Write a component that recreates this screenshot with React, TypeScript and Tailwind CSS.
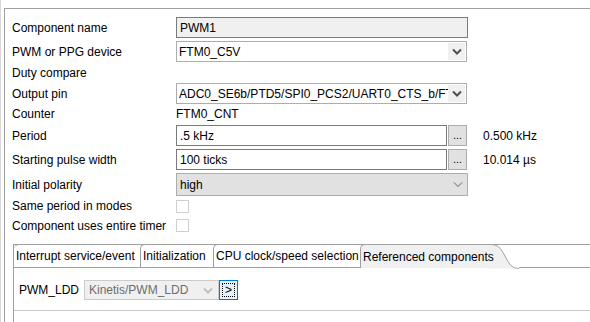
import React from 'react';

const font = { fontFamily: '"Liberation Sans", Arial, sans-serif' };

function Chevron({ thin = false, color = '#5a5a5a' }: { thin?: boolean; color?: string }) {
  return (
    <svg width="10" height="7" viewBox="0 0 10 7">
      <path d="M1 1.5 L5 5.5 L9 1.5" fill="none" stroke={color} strokeWidth={thin ? 1 : 2} />
    </svg>
  );
}

function Row({ label, h, mt = 0, children }: { label: string; h: number; mt?: number; children?: React.ReactNode }) {
  return (
    <div className="flex items-center" style={{ height: h, marginTop: mt }}>
      <div className="w-[164px] shrink-0 text-[12px] text-black whitespace-nowrap">{label}</div>
      {children}
    </div>
  );
}

export default function App() {
  return (
    <div className="w-[590px] h-[322px] bg-white flex overflow-hidden text-[12px] text-black" style={font}>
      <div className="w-[4px] shrink-0 border-l border-[#d8d8d8]" />
      <div className="flex-1 mt-[8px] border-t border-l border-[#a0a0a0] flex flex-col">
        {/* property rows */}
        <div className="pl-[7px] pt-[8px] flex flex-col">
          <Row label="Component name" h={21}>
            <div className="w-[292px] h-[21px] border border-[#7a7a7a] bg-[#f0f0f0] flex items-center pl-[3px]">PWM1</div>
          </Row>
          <Row label="PWM or PPG device" h={21} mt={3}>
            <div className="w-[291px] h-[21px] border border-[#adadad] bg-white flex items-center pl-[2px]">
              <span className="flex-1">FTM0_C5V</span>
              <span className="w-[17px] h-[17px] mr-[1px] bg-[#f0f0f0] flex items-center justify-center">
                <Chevron color="#505050" />
              </span>
            </div>
          </Row>
          <Row label="Duty compare" h={21} />
          <Row label="Output pin" h={21}>
            <div className="w-[291px] h-[21px] border border-[#adadad] bg-white flex items-center pl-[2px]">
              <span className="flex-1 overflow-hidden whitespace-nowrap">ADC0_SE6b/PTD5/SPI0_PCS2/UART0_CTS_b/FTM0_C5/EWM_OUT_b</span>
              <span className="w-[17px] h-[17px] mr-[1px] bg-[#f0f0f0] flex items-center justify-center shrink-0">
                <Chevron color="#505050" />
              </span>
            </div>
          </Row>
          <Row label="Counter" h={20}>
            <span>FTM0_CNT</span>
          </Row>
          <Row label="Period" h={21} mt={1}>
            <div className="w-[271px] h-[21px] border border-[#7a7a7a] bg-white flex items-center pl-[3px]">.5 kHz</div>
            <div className="ml-[1px] w-[19px] h-[21px] border border-[#adadad] bg-[#e1e1e1] flex items-end justify-center pb-[4px] leading-none text-[11px]">...</div>
            <span className="ml-[16px]">0.500 kHz</span>
          </Row>
          <Row label="Starting pulse width" h={21} mt={3}>
            <div className="w-[271px] h-[21px] border border-[#7a7a7a] bg-white flex items-center pl-[3px]">100 ticks</div>
            <div className="ml-[1px] w-[19px] h-[21px] border border-[#adadad] bg-[#e1e1e1] flex items-end justify-center pb-[4px] leading-none text-[11px]">...</div>
            <span className="ml-[16px]">10.014 µs</span>
          </Row>
          <Row label="Initial polarity" h={23} mt={3}>
            <div className="w-[292px] h-[23px] border border-[#adadad] bg-[#e1e1e1] flex items-center pl-[3px]">
              <span className="flex-1">high</span>
              <span className="mr-[4px] flex items-center">
                <Chevron thin color="#606060" />
              </span>
            </div>
          </Row>
          <Row label="Same period in modes" h={20}>
            <span className="w-[13px] h-[13px] border border-[#d0d0d0] bg-white" />
          </Row>
          <Row label="Component uses entire timer" h={19}>
            <span className="w-[13px] h-[13px] border border-[#d0d0d0] bg-white" />
          </Row>
        </div>

        {/* tab folder */}
        <div className="ml-[8px] mt-[9px] flex-1 border-l border-[#a0a0a0] flex flex-col">
          <div className="h-[24px] flex border-t border-[#a0a0a0] whitespace-nowrap">
            <div className="w-[126px] -mt-px border-t border-b border-[#a0a0a0] rounded-tl-[5px] flex items-center pl-[2px]">Interrupt service/event</div>
            <div className="w-[73px] -mt-px border-t border-l border-b border-[#a0a0a0] rounded-tl-[5px] flex items-center pl-[2px]">Initialization</div>
            <div className="w-[147px] -mt-px border-t border-l border-b border-[#a0a0a0] rounded-tl-[5px] flex items-center pl-[2px]">CPU clock/speed selection</div>
            <div className="-mt-px flex">
              <div className="w-[128px] border-t border-l border-[#a0a0a0] rounded-tl-[5px] bg-[#f0f0f0] flex items-center pl-[2px]">
                <span className="relative z-10">Referenced components</span>
              </div>
              <svg width="31" height="25" viewBox="0 0 31 25" className="block">
                <path d="M0 0.5 L2 0.5 C10 0.5 12 3 17 12 C21 20 24 24.5 31 24.5 L0 24.5 Z" fill="#f0f0f0" />
                <path d="M0 0.5 L2 0.5 C10 0.5 12 3 17 12 C21 20 24 24.5 31 24.5" fill="none" stroke="#a0a0a0" />
              </svg>
            </div>
            <div className="flex-1 border-b border-[#a0a0a0]" />
          </div>
          <div className="h-[43px] border-b border-[#c8c8c8] flex items-center pl-[5px] pt-[2px]">
            <span className="w-[65px]">PWM_LDD</span>
            <div className="w-[135px] h-[20px] border border-[#cccccc] bg-[#f0f0f0] flex items-center pl-[4px] text-[#6d6d6d]">
              <span className="flex-1">Kinetis/PWM_LDD</span>
              <span className="mr-[5px] flex items-center">
                <Chevron color="#c0c0c0" />
              </span>
            </div>
            <div className="w-[19px] h-[20px] border border-[#0078d7] bg-[#e5f1fb] flex items-center justify-center">
              <span className="w-[13px] h-[14px] border border-dotted border-black flex items-center justify-center leading-none text-[12px]">&gt;</span>
            </div>
          </div>
          <div className="flex-1" />
        </div>
      </div>
    </div>
  );
}
